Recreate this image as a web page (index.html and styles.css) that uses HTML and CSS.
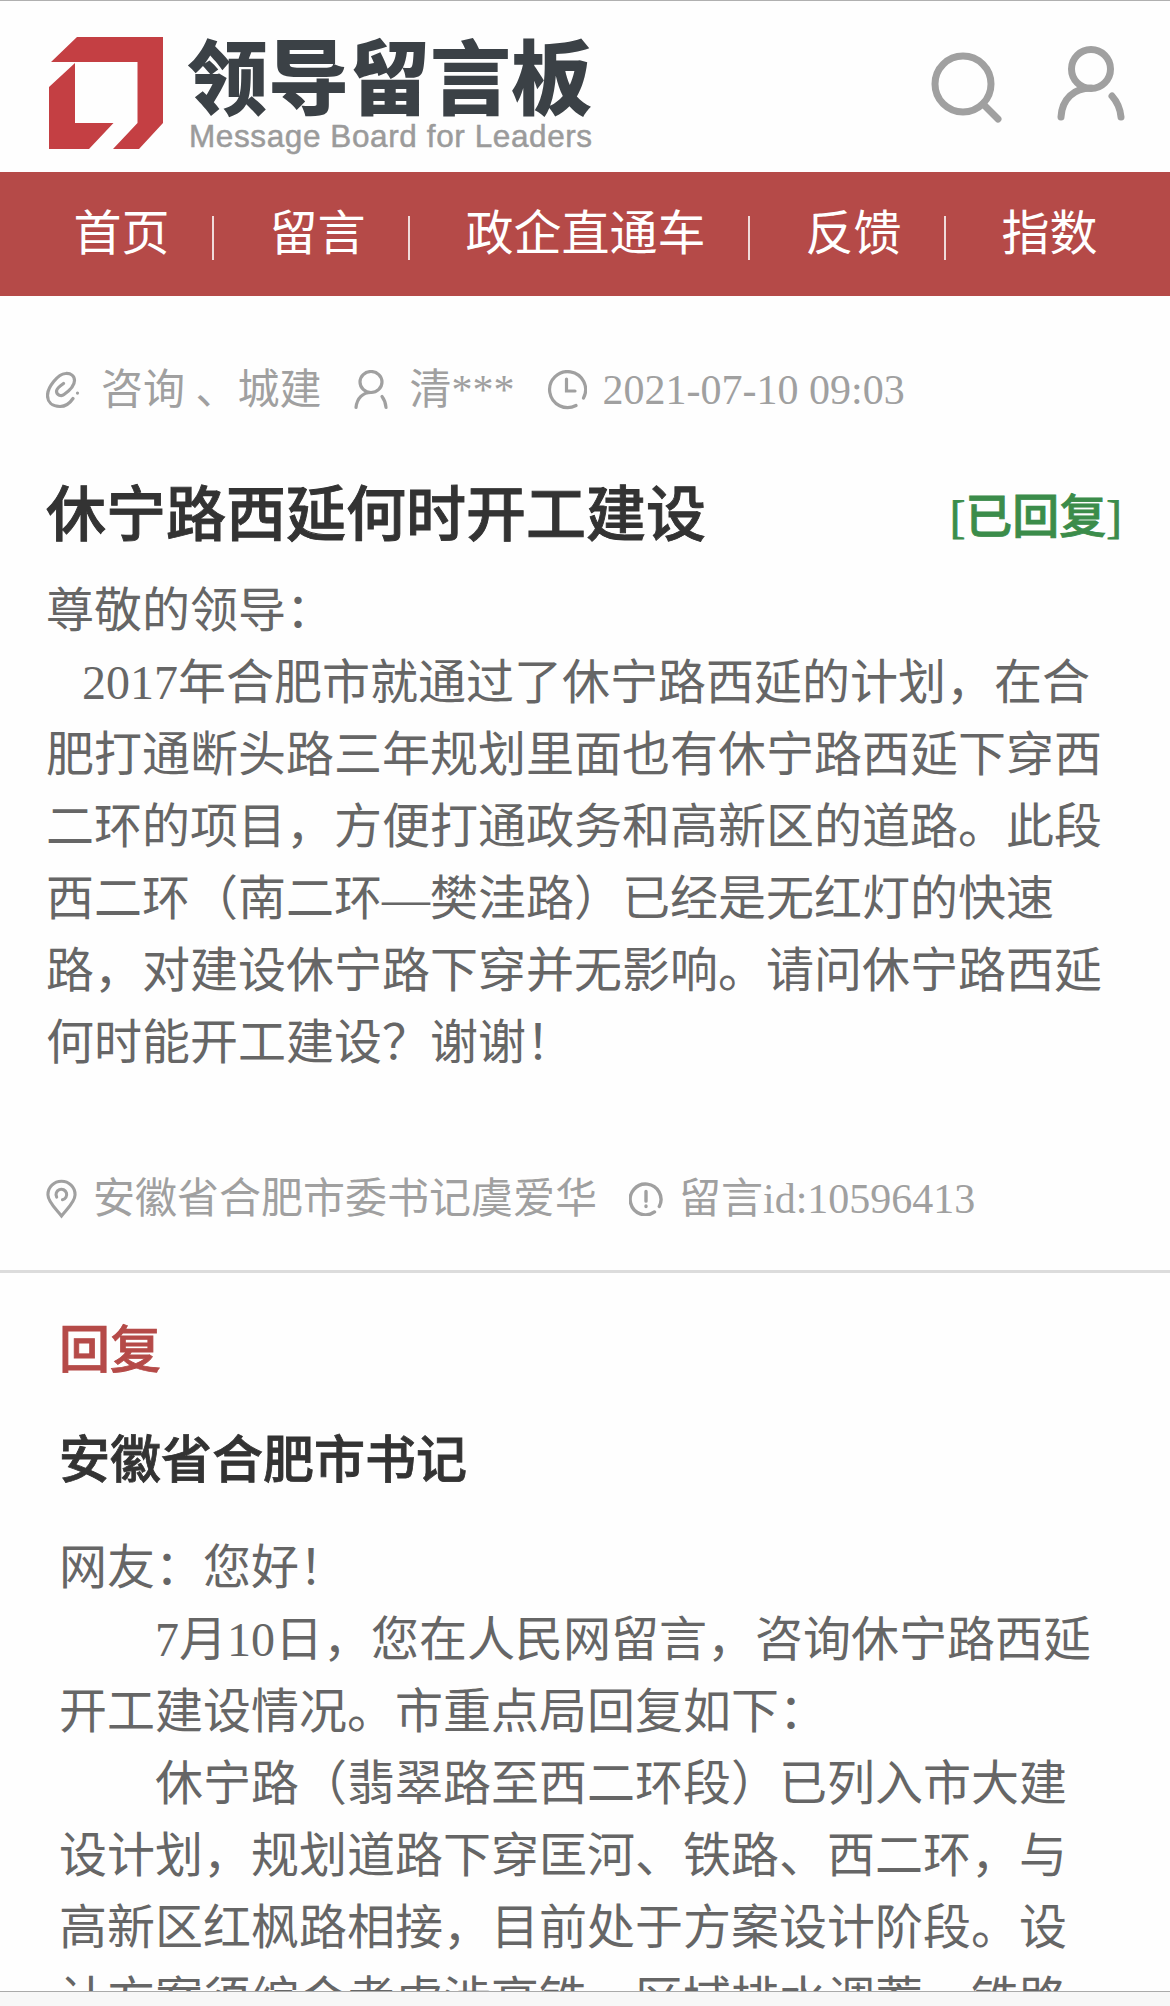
FILE: index.html
```html
<!DOCTYPE html>
<html lang="zh-CN">
<head>
    <meta charset="UTF-8">
    <meta name="viewport" content="width=device-width, initial-scale=1.0">
    <title>领导留言板</title>
    <link rel="stylesheet" href="styles.css">
</head>
<body>
    <header class="header">
        <a class="logo" href="#">
            <svg class="logo-mark" viewBox="0 0 114 112">
                <path d="M28 0H114V86L90 112H64L88.500 86V25H2Z"/>
                <path d="M26 26V86H64.500L40 112H0V50Z"/>
            </svg>
            <span class="logo-text">
                <span class="logo-name">领导留言板</span>
                <span class="logo-en">Message Board for Leaders</span>
            </span>
        </a>
        <div class="tools">
            <svg class="icon-search" viewBox="0 0 72 72">
                <circle cx="32" cy="32" r="28"/>
                <path d="M52 52L67 67"/>
            </svg>
            <svg class="icon-user" viewBox="0 0 68 76">
                <circle cx="34" cy="23" r="19.500"/>
                <path d="M4 71C5 53 17 42 34 42M55 50Q63 59 64 71"/>
            </svg>
        </div>
    </header>

    <nav class="nav">
        <a href="#">首页</a>
        <a href="#">留言</a>
        <a href="#">政企直通车</a>
        <a href="#">反馈</a>
        <a href="#">指数</a>
    </nav>

    <main>
        <section class="message">
            <div class="meta">
                <span class="meta-item">
                    <svg class="icon-clip" viewBox="0 0 34 38">
                        <path d="M27 27.500C24 32 20 35.500 14 35.500C6 35.500 1.500 31 1.500 24.500C1.500 16 12 3 19.500 2.500C25 2 28.500 5 28.500 9.500C28.500 15 23 20 18 23.500C15.500 25.500 10.500 24.500 10.500 20C10.500 17.500 14 15 17.500 12.500"/>
                        <path d="M31.500 22V22.100"/>
                    </svg>
                    咨询 、城建
                </span>
                <span class="meta-item">
                    <svg class="icon-person" viewBox="0 0 34 40">
                        <ellipse cx="17" cy="12" rx="11" ry="10.500"/>
                        <path d="M2 37.500C3 28 9 22.500 17 22.500M28 26.500Q31.500 31 32 37.500"/>
                    </svg>
                    清***
                </span>
                <span class="meta-item">
                    <svg class="icon-clock" viewBox="0 0 40 40">
                        <path d="M29 35.500A18 18 0 1 1 36.500 28M19.500 9V21H28"/>
                    </svg>
                    2021-07-10 09:03
                </span>
            </div>

            <div class="title-row">
                <h1>休宁路西延何时开工建设</h1>
                <span class="status">[已回复]</span>
            </div>

            <p class="content">尊敬的领导：<br>&nbsp;&nbsp;&nbsp;2017年合肥市就通过了休宁路西延的计划，在合<br>肥打通断头路三年规划里面也有休宁路西延下穿西<br>二环的项目，方便打通政务和高新区的道路。此段<br>西二环（南二环—樊洼路）已经是无红灯的快速<br>路，对建设休宁路下穿并无影响。请问休宁路西延<br>何时能开工建设？谢谢！</p>

            <div class="meta meta-bottom">
                <span class="meta-item">
                    <svg class="icon-pin" viewBox="0 0 32 40">
                        <path d="M16 37.500C11 31 2 23 2 15.500A14 13.800 0 0 1 30 15.500C30 23 21 31 16 37.500Z"/>
                        <path d="M11 18A5.500 5.500 0 1 1 17 20.800"/>
                    </svg>
                    安徽省合肥市委书记虞爱华
                </span>
                <span class="meta-item">
                    <svg class="icon-info" viewBox="0 0 32 32">
                        <path d="M24 28.200A14.500 14.500 0 1 1 28.500 23M16 9V18M16 22.500V23"/>
                    </svg>
                    留言id:10596413
                </span>
            </div>
        </section>

        <section class="reply">
            <h2>回复</h2>
            <h3>安徽省合肥市书记</h3>
            <p class="content">网友：您好！<br>　　7月10日，您在人民网留言，咨询休宁路西延<br>开工建设情况。市重点局回复如下：<br>　　休宁路（翡翠路至西二环段）已列入市大建<br>设计划，规划道路下穿匡河、铁路、西二环，与<br>高新区红枫路相接，目前处于方案设计阶段。设<br>计方案须综合考虑涉高铁、区域排水调蓄、铁路</p>
        </section>
    </main>

    <div class="bottom-bar"></div>
</body>
</html>
```
FILE: styles.css
```css
* {
    box-sizing: border-box;
}

body {
    margin: 0;
    height: 2006px;
    display: flex;
    flex-direction: column;
    overflow: hidden;
    background-color: #fefefe;
    color: #666;
    font-family: 'Liberation Serif', 'Noto Sans CJK SC', serif;
}

a {
    color: inherit;
    text-decoration: none;
}

h1, h2, h3, p {
    margin: 0;
}

svg {
    display: block;
    flex: none;
    fill: none;
    stroke: #a0a0a0;
    stroke-linecap: round;
}

/* Header */
.header {
    height: 172px;
    flex: none;
    display: flex;
    justify-content: space-between;
    align-items: flex-start;
    padding: 36px 45px 0 49px;
    border-top: 1px solid #b0b0b0;
}

.logo {
    display: flex;
    gap: 24px;
}

.logo-mark {
    width: 114px;
    height: 112px;
    fill: #c43f43;
    stroke: none;
}

.logo-text {
    display: flex;
    flex-direction: column;
    white-space: nowrap;
}

.logo-name {
    font-family: 'Noto Sans CJK SC', sans-serif;
    font-size: 81px;
    font-weight: 900;
    line-height: 72px;
    color: #3b4146;
}

.logo-en {
    margin: 9px 0 0 2px;
    font-family: 'Liberation Sans', sans-serif;
    font-size: 31.500px;
    line-height: 36px;
    letter-spacing: 0.600px;
    color: #9b9b9b;
    -webkit-text-stroke: 0.500px #9b9b9b;
}

.tools {
    display: flex;
    gap: 54px;
    padding-top: 9px;
}

.icon-search {
    width: 72px;
    height: 72px;
    margin-top: 6px;
    stroke-width: 7;
}

.icon-user {
    width: 68px;
    height: 76px;
    stroke-width: 7;
}

/* Navigation */
.nav {
    height: 124px;
    flex: none;
    display: flex;
    align-items: center;
    padding-left: 73.500px;
    background-color: #b54a48;
    color: #fff;
    font-size: 48px;
    line-height: 72px;
}

.nav a {
    display: flex;
    align-items: center;
    white-space: nowrap;
}

/* separator between the links */
.nav a + a::before {
    content: "";
    width: 2px;
    height: 44px;
    margin: 8px 55.500px 0 42.500px;
    background-color: rgba(255, 255, 255, 0.8);
}

/* Message */
main {
    flex: 1;
    min-height: 0;
    overflow: hidden;
}

.message {
    height: 977px;
    padding: 62px 48px 0 46px;
    border-bottom: 3px solid #dcdcdc;
}

.meta {
    display: flex;
    gap: 32px;
    font-size: 42px;
    line-height: 64px;
    color: #a0a0a0;
    white-space: nowrap;
}

.meta-item {
    display: flex;
    align-items: center;
    gap: 16px;
}

.meta svg {
    stroke-width: 3.200;
}

.icon-clip {
    width: 34px;
    height: 38px;
    margin-right: 5px;
}

.icon-person {
    width: 34px;
    height: 40px;
    margin-right: 6px;
}

.icon-clock {
    width: 40px;
    height: 40px;
}

.icon-pin {
    width: 31px;
    height: 40px;
}

.icon-info {
    width: 34px;
    height: 34px;
}

.title-row {
    display: flex;
    justify-content: space-between;
    align-items: center;
    margin-top: 49px;
    line-height: 90px;
}

h1 {
    font-size: 60px;
    font-weight: 500;
    color: #333;
    -webkit-text-stroke: 0.900px #333;
}

.status {
    font-size: 47px;
    font-weight: 500;
    line-height: 84px;
    padding-top: 2px;
    color: #3b8c4a;
    -webkit-text-stroke: 0.800px #3b8c4a;
}

.content {
    font-size: 48px;
    line-height: 72px;
    white-space: nowrap;
}

.title-row + .content {
    margin-top: 14px;
}

.meta-bottom {
    margin-top: 88px;
}

/* Reply */
.reply {
    padding: 40px 59px 0;
}

h2, h3 {
    font-size: 51px;
    font-weight: 500;
    line-height: 76px;
}

h2 {
    color: #b54a48;
    -webkit-text-stroke: 0.800px #b54a48;
}

h3 {
    margin-top: 34px;
    color: #333;
    -webkit-text-stroke: 0.800px #333;
}

.reply .content {
    margin-top: 33px;
}

.bottom-bar {
    height: 15px;
    flex: none;
    background-color: #f7f7f7;
    border-top: 1px solid #aaa;
}
```
